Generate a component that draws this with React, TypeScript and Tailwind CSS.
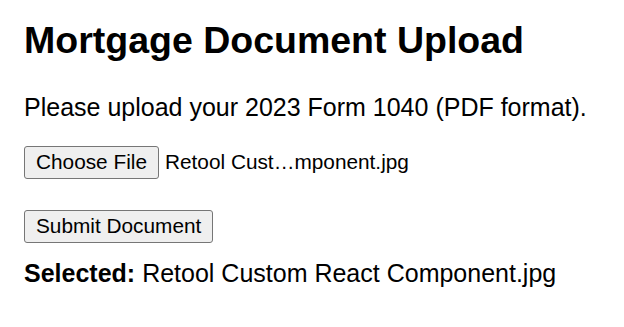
import React from "react";

const fileName = "Retool Custom React Component.jpg";

function GrayButton({ children }: { children: React.ReactNode }) {
  return (
    <button
      type="button"
      className="flex h-[33px] items-center rounded-[3px] border-[1.5px] border-[#767676] bg-[#efefef] px-[11px] text-[20.8px] leading-none text-black"
    >
      {children}
    </button>
  );
}

export default function App() {
  return (
    <div className="min-h-screen bg-white px-[24px] pt-[19px] font-['Liberation_Sans',Arial,sans-serif] text-black">
      <h1 className="text-[37.5px] font-bold leading-[43px]">Mortgage Document Upload</h1>
      <p className="mt-[31px] text-[25px] leading-[29px]">
        Please upload your 2023 Form 1040 (PDF format).
      </p>

      <div className="mt-[24px] flex items-center">
        <GrayButton>Choose File</GrayButton>
        <span className="ml-[6px] text-[20.8px] leading-none">Retool Cust…mponent.jpg</span>
      </div>

      <div className="mt-[31px] flex">
        <GrayButton>Submit Document</GrayButton>
      </div>

      <p className="mt-[16px] text-[25px] leading-[29px]">
        <strong className="font-bold">Selected:</strong> {fileName}
      </p>
    </div>
  );
}
